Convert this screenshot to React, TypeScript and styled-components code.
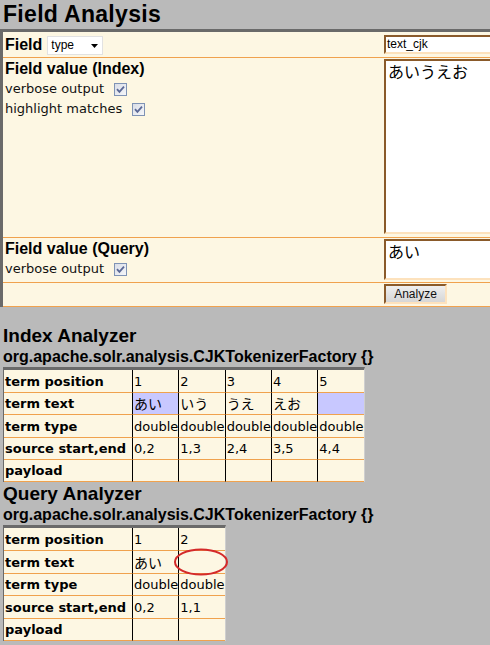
import React from 'react';
import styled, { createGlobalStyle } from 'styled-components';

const C = {
  gray: '#bababa',
  dark: '#6a6a6a',
  cream: '#fdf7e3',
  orange: '#f0a24e',
  brown: '#8a5a2a',
  peach: '#fde2bd',
  lav: '#c8c8ff',
};

const SANS = '"Liberation Sans", Arial, sans-serif';
const BODY = '"DejaVu Sans", "Noto Sans CJK JP", sans-serif';
const JP = '"Noto Sans CJK JP", "DejaVu Sans", sans-serif';

const Global = createGlobalStyle`
  html, body { margin: 0; padding: 0; background: ${C.gray}; overflow: hidden; }
  body { font-family: ${SANS}; color: #000; }
  * { box-sizing: border-box; }
`;

const Page = styled.div`
  width: 490px;
  height: 645px;
  overflow: hidden;
  background: ${C.gray};
`;

const Title = styled.h1`
  margin: 0;
  padding-left: 3px;
  font: bold 23px/29px ${SANS};
  letter-spacing: 0.3px;
`;

const FormBox = styled.div`
  width: 640px;
  background: ${C.cream};
  border-top: 3px solid ${C.dark};
  border-left: 3px solid ${C.dark};
`;

const FormRow = styled.div<{ $h: number }>`
  display: grid;
  grid-template-columns: 380px 1fr;
  height: ${(p) => p.$h}px;
  border-bottom: 1px solid ${C.orange};
`;

const LeftCell = styled.div<{ $inline?: boolean }>`
  padding: ${(p) => (p.$inline ? '4px' : '1px')} 0 0 2px;
  display: flex;
  flex-direction: ${(p) => (p.$inline ? 'row' : 'column')};
  align-items: ${(p) => (p.$inline ? 'flex-start' : 'stretch')};
  gap: ${(p) => (p.$inline ? '5px' : '0')};
`;

const RightCell = styled.div<{ $pt: number }>`
  padding: ${(p) => p.$pt}px 0 0 1px;
`;

const FieldLabel = styled.div`
  font: bold 16px/17px ${SANS};
`;

const SectionLabel = styled.div`
  font: bold 16px/20px ${SANS};
`;

const Option = styled.label`
  display: flex;
  align-items: center;
  gap: 10px;
  height: 20px;
  font: 13px/20px ${BODY};
  color: #111;
`;

const Box = styled.span`
  display: inline-block;
  width: 13px;
  height: 13px;
  margin-top: -1px;
`;

const SelectBox = styled.div`
  width: 56px;
  height: 19px;
  background: #fff;
  border: 1px solid #e2e2e2;
  display: flex;
  align-items: center;
  justify-content: space-between;
  padding: 0 4px 0 3px;
  font: 12px/17px ${SANS};
`;

const Inset = `
  border-style: solid;
  border-width: 2px;
  border-color: ${C.brown} ${C.peach} ${C.peach} ${C.brown};
`;

const TextInput = styled.div`
  ${Inset}
  width: 220px;
  height: 19px;
  background: #fff;
  padding-left: 1px;
  font: 12px/15px ${SANS};
`;

const Area = styled.div<{ $h: number }>`
  ${Inset}
  width: 220px;
  height: ${(p) => p.$h}px;
  background: #fff;
  padding: 0 0 0 2px;
  font: 16px/20px ${JP};
`;

const Button = styled.button`
  ${Inset}
  width: 63px;
  height: 20px;
  padding: 0;
  background: linear-gradient(#efefef, #d6d6d6);
  font: 12px/16px ${SANS};
  color: #111;
`;

const Heading = styled.h2<{ $mt: number }>`
  margin: ${(p) => p.$mt}px 0 0;
  padding-left: 3px;
  font: bold 19px/22px ${SANS};
`;

const SubHeading = styled.h3`
  margin: 0;
  padding-left: 3px;
  font: bold 16px/20px ${SANS};
`;

const ATable = styled.table`
  margin-left: 3px;
  border-collapse: separate;
  border-spacing: 0;
  background: ${C.cream};
  border-top: 3px solid ${C.dark};
  border-left: 1px solid ${C.dark};
  border-right: 1px solid #cfcfcf;
`;

const HeadCell = styled.td<{ $h: number }>`
  width: 128px;
  height: ${(p) => p.$h}px;
  padding: 0 0 0 1px;
  border-bottom: 1px solid ${C.orange};
  font: bold 13px/21px ${BODY};
  white-space: nowrap;
`;

const DataCell = styled.td<{ $hl?: boolean; $jp?: boolean }>`
  position: relative;
  width: 46px;
  padding: 0 0 0 1px;
  border-left: 1px solid #000;
  border-bottom: 1px solid ${C.orange};
  background: ${(p) => (p.$hl ? C.lav : 'transparent')};
  font: ${(p) => (p.$jp ? `14px/21px ${JP}` : `13px/21px ${BODY}`)};
  white-space: nowrap;
`;

const Mark = styled.svg`
  position: absolute;
  left: -5px;
  top: -3px;
  overflow: visible;
`;

const Check = () => (
  <Box>
    <svg width="13" height="13" viewBox="0 0 13 13">
      <defs>
        <linearGradient id="cbg" x1="0" y1="0" x2="1" y2="1">
          <stop offset="0" stopColor="#d8dce6" />
          <stop offset="1" stopColor="#f6f7fa" />
        </linearGradient>
      </defs>
      <rect x="0.5" y="0.5" width="12" height="12" fill="url(#cbg)" stroke="#7f93b5" />
      <path d="M3 6.2 L5.4 8.8 L10 3.6" fill="none" stroke="#5a6896" strokeWidth="1.8" />
    </svg>
  </Box>
);

type Row = { label: string; h: number; cells: { v: string; hl?: boolean; jp?: boolean; mark?: boolean }[] };

const AnalysisTable = ({ rows }: { rows: Row[] }) => (
  <ATable>
    <tbody>
      {rows.map((r) => (
        <tr key={r.label}>
          <HeadCell $h={r.h}>{r.label}</HeadCell>
          {r.cells.map((c, i) => (
            <DataCell key={i} $hl={c.hl} $jp={c.jp}>
              {c.v}
              {c.mark && (
                <Mark width="54" height="28" viewBox="0 0 54 28">
                  <ellipse cx="27" cy="14" rx="26" ry="12.5" fill="none" stroke="#d42a2a" strokeWidth="2" />
                </Mark>
              )}
            </DataCell>
          ))}
        </tr>
      ))}
    </tbody>
  </ATable>
);

const indexRows: Row[] = [
  { label: 'term position', h: 23, cells: ['1', '2', '3', '4', '5'].map((v) => ({ v })) },
  {
    label: 'term text',
    h: 22,
    cells: [
      { v: 'あい', hl: true, jp: true },
      { v: 'いう', jp: true },
      { v: 'うえ', jp: true },
      { v: 'えお', jp: true },
      { v: '', hl: true, jp: true },
    ],
  },
  { label: 'term type', h: 23, cells: Array.from({ length: 5 }, () => ({ v: 'double' })) },
  { label: 'source start,end', h: 22, cells: ['0,2', '1,3', '2,4', '3,5', '4,4'].map((v) => ({ v })) },
  { label: 'payload', h: 22, cells: Array.from({ length: 5 }, () => ({ v: '' })) },
];

const queryRows: Row[] = [
  { label: 'term position', h: 23, cells: [{ v: '1' }, { v: '2' }] },
  { label: 'term text', h: 23, cells: [{ v: 'あい', jp: true }, { v: '', jp: true, mark: true }] },
  { label: 'term type', h: 22, cells: [{ v: 'double' }, { v: 'double' }] },
  { label: 'source start,end', h: 23, cells: [{ v: '0,2' }, { v: '1,1' }] },
  { label: 'payload', h: 21, cells: [{ v: '' }, { v: '' }] },
];

export default function App() {
  return (
    <Page>
      <Global />
      <Title>Field Analysis</Title>
      <FormBox>
        <FormRow $h={26}>
          <LeftCell $inline>
            <FieldLabel>Field</FieldLabel>
            <SelectBox>
              <span>type</span>
              <svg width="7" height="4" viewBox="0 0 7 4">
                <path d="M0 0 H7 L3.5 4 Z" fill="#000" />
              </svg>
            </SelectBox>
          </LeftCell>
          <RightCell $pt={3}>
            <TextInput>text_cjk</TextInput>
          </RightCell>
        </FormRow>
        <FormRow $h={180}>
          <LeftCell>
            <SectionLabel>Field value (Index)</SectionLabel>
            <Option>
              verbose output <Check />
            </Option>
            <Option>
              highlight matches <Check />
            </Option>
          </LeftCell>
          <RightCell $pt={1}>
            <Area $h={175}>あいうえお</Area>
          </RightCell>
        </FormRow>
        <FormRow $h={45}>
          <LeftCell>
            <SectionLabel>Field value (Query)</SectionLabel>
            <Option>
              verbose output <Check />
            </Option>
          </LeftCell>
          <RightCell $pt={1}>
            <Area $h={41}>あい</Area>
          </RightCell>
        </FormRow>
        <FormRow $h={24}>
          <LeftCell />
          <RightCell $pt={1}>
            <Button>Analyze</Button>
          </RightCell>
        </FormRow>
      </FormBox>
      <Heading $mt={18}>Index Analyzer</Heading>
      <SubHeading>org.apache.solr.analysis.CJKTokenizerFactory {'{}'}</SubHeading>
      <AnalysisTable rows={indexRows} />
      <Heading $mt={1}>Query Analyzer</Heading>
      <SubHeading>org.apache.solr.analysis.CJKTokenizerFactory {'{}'}</SubHeading>
      <AnalysisTable rows={queryRows} />
    </Page>
  );
}
